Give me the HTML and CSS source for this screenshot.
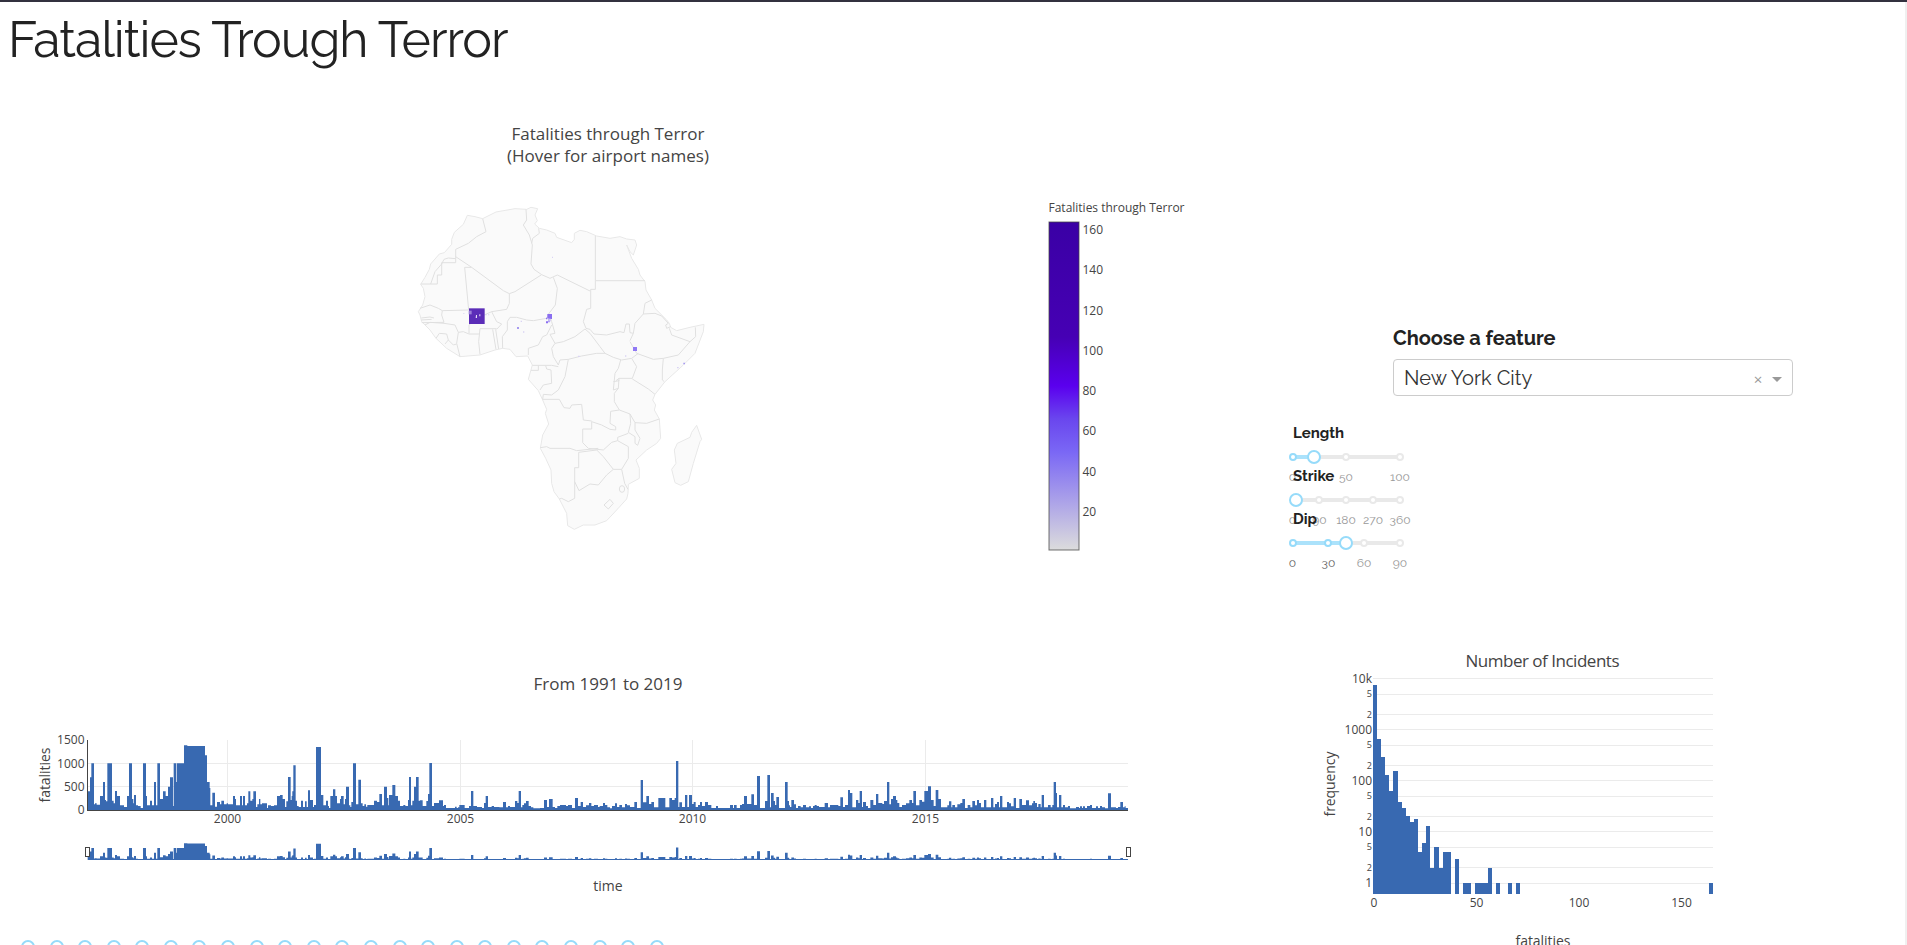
FILE: index.html
```html
<!DOCTYPE html>
<html lang="en">
<head>
<meta charset="utf-8">
<title>Fatalities Trough Terror</title>
<link rel="stylesheet" href="styles.css">
</head>
<body>
<div class="page">
  <h1 class="page-title"><span>Fatalities Trough Terror</span></h1>
  <main class="board">
    <div class="col-left">
      <svg class="map" viewBox="0 90 1216 530">
        <defs>
          <linearGradient id="scale" x1="0" y1="1" x2="0" y2="0">
            <stop offset="0" stop-color="#dcdcdc"/>
            <stop offset=".3" stop-color="#7a67f5"/>
            <stop offset=".4" stop-color="#6a46ee"/>
            <stop offset=".5" stop-color="#5a00ee"/>
            <stop offset=".65" stop-color="#4600b4"/>
            <stop offset="1" stop-color="#3a00a5"/>
          </linearGradient>
        </defs>
        <g class="chart-title">
          <text x="608" y="140" textLength="193">Fatalities through Terror</text>
          <text x="608" y="162" textLength="202">(Hover for airport names)</text>
        </g>
        <g transform="translate(400 190) scale(.33333)">
          <path class="land" d="M62 283L75 262L88 238L92 222L118 192L133 188L155 163L155 148L163 127L190 103L202 76L225 80L248 86L288 66L345 56L380 58L393 52L413 56L405 75L412 92L404 102L418 115L440 120L465 130L470 142L515 158L523 148L523 130L540 121L560 125L590 138L630 145L660 140L680 147L705 150L710 165L700 195L690 185L680 165L695 205L715 238L720 255L735 275L738 300L755 330L765 355L800 390L808 400L812 412L830 422L870 412L912 403L910 425L885 490L850 525L795 575L765 613L758 630L767 645L763 660L778 687L782 745L770 760L740 780L708 810L718 835L718 865L685 883L684 910L680 927L650 960L620 992L585 1005L550 1005L523 1018L503 1007L500 970L478 927L462 905L455 880L453 840L437 805L421 775L428 735L446 702L436 670L440 658L428 630L415 602L385 568L397 525L383 498L348 500L330 478L308 475L285 480L240 495L180 500L140 475L108 445L90 420L65 395L60 375L55 365L68 345L75 320L70 295Z
          M890 706L905 748L900 755L880 820L865 875L842 886L825 878L815 838L828 820L823 780L832 760L870 742L875 727Z"/>
          <path class="border" d="M248 86L258 125L230 140L205 160L167 178V218H125V255H112V282H62M167 206L145 204L132 208L125 222L105 245L92 282M167 200L215 232L310 302L328 311L345 305L425 254L402 238L393 222L397 165L388 135L370 105L380 90L378 58M395 160L398 145L418 130L416 115M215 232H194L206 360L127 362M60 355L90 345L115 355L127 362L125 375L132 397L65 398M64 384L90 381L102 384M64 390L95 388M328 311V340L320 358L275 365M425 254L450 265L472 255L570 303M586 138V272H735M586 272V298H572V355L560 358L550 395L558 415M460 262L472 295L466 345L447 370M322 395L330 382L350 382L380 390L400 392L440 385L447 370L455 395L465 430L450 433L465 460L490 455L525 440L555 417L570 430L600 470L615 490M465 460L455 475L460 500L475 525L480 510L505 508L545 498L590 490L615 490M385 495V475L415 465L428 440L440 435L455 405M308 475L307 440L322 420V395M278 418L288 478M287 418L296 477M240 416L236 455L240 493M240 416H290M207 430V405L230 385L275 365L290 395L305 402L290 418M175 427L190 425L207 432L237 432M175 427L170 460L180 500M75 405L90 397L132 400L165 405L175 427M108 445L118 430L140 432L145 450L135 462M145 450L160 465L170 462
          M755 330L735 340L730 372L705 400L700 430L690 452M558 415L570 418L582 432L620 435L660 425L672 428L678 402H688L690 428L700 430M730 372L765 370L785 378L805 400L797 405L800 415L812 410M808 415L815 435L870 455L887 440L886 412M870 455L835 495L790 505L760 508L710 490L690 455M615 490L640 502L665 510L695 505L715 490M790 505L787 540V570L793 575M695 505L710 530L697 565H657L648 572M662 510L655 535L645 550L640 600M697 567L745 597L765 613M657 565L655 595L643 610V635L658 660L690 672L705 698L740 700L778 687M640 575L658 572M655 595L640 600M690 672L692 700L685 727L705 740V760L713 766L720 745L705 720V698M658 660L632 664L630 700L647 710V720L630 718L605 705L575 695V717H548V758L565 775L610 780L635 757L653 752L685 770V805L665 838H640L610 800L590 780M653 752V742L685 730M428 628H478L492 653L510 655L515 645L545 643L550 690L575 693M421 773L440 770L450 775L510 775L530 782L595 775M590 780L536 787V833H524V925L505 935L485 925L478 927M524 875L537 902L570 882L595 885L620 855L640 838M665 838L674 880L684 898M612 945L630 928L640 940L625 957ZM397 526H455L475 530M393 541H415V527M437 527L440 537L453 540L455 580L430 585L420 600M505 508L495 560L475 600L455 615L430 613L428 628"/>
          <ellipse class="border" cx="666" cy="897" rx="8" ry="10"/>
          <rect x="207" y="355" width="47" height="47" fill="#5b2db8"/>
          <path d="M228 375h3v9h-4zM238 373h3v6h-3z" fill="#e8def8"/>
          <rect x="206" y="362" width="9" height="11" fill="#9b80d8"/>
          <path d="M442 372h14v15h-7v10h-4v-12h-3zM438 394h6v6h-6zM438 383h4v5h-4z" fill="#8a6ef0"/>
          <path d="M445 386h7v8h-7z" fill="#c9bff5"/>
          <rect x="699" y="471" width="12" height="12" fill="#9079f5"/>
          <path d="M351 411h6v6h-6zM850 518h5v5h-5z" fill="#a79af0"/>
          <path d="M256 373h4v3h-4zM264 373h4v3h-4zM369 424h4v4h-4zM534 497h5v4h-5zM675 496h4v4h-4zM831 531h5v4h-5zM456 200h3v4h-3zM190 369h3v3h-3zM362 392h4v4h-4z" fill="#d9d3f4"/>
        </g>
        <g class="tick">
          <text x="1048.500" y="212" textLength="136">Fatalities through Terror</text>
          <rect x="1049" y="222" width="30" height="328" fill="url(#scale)" stroke="#444" stroke-opacity=".75"/>
          <text x="1082.500" y="234">160</text><text x="1082.500" y="274">140</text>
          <text x="1082.500" y="315">120</text><text x="1082.500" y="355">100</text>
          <text x="1082.500" y="395">80</text><text x="1082.500" y="435">60</text>
          <text x="1082.500" y="476">40</text><text x="1082.500" y="516">20</text>
        </g>
      </svg>
      <svg class="timeline" viewBox="0 620 1216 300">
        <text class="chart-title" x="608" y="690" textLength="149">From 1991 to 2019</text>
        <path class="grid" d="M88 763.5H1128M88 786.5H1128M227.5 740V810M460.5 740V810M692.5 740V810M925.5 740V810"/>
        <g id="series" class="bars">
          <path transform="translate(20 660) scale(.33333)" d="M203 450V394H210V352H214V310H222V433H225V430H230V434H240V408H249V366H255V420H258V424H262V310H276V422H281V430H285V393H291V408H300V436H312V441H321V408H327V310H336V417H340V430H342V405H348V436H354V438H362V444H369V310H378V408H381V436H390V422H396V436H402V366H408V436H412V310H420V417H429V394H437V408H444V380H450V352H459V438H461V310H468V366H470V310H492V256H502V258H555V286H561V366H569V384H571V436H577V398H585V440H591V426H600V433H604V422H612V433H620V430H624V433H639V408H645V417H648V436H660V408H666V436H669V408H675V436H681V430H685V394H691V422H697V417H700V394H708V441H712V433H717V417H721V433H726V430H741V444H744V436H753V438H762V436H771V408H780V405H788V417H795V441H799V424H804V351H812V420H815V408H817V394H820V316H827V422H831V438H836V441H843V422H849V441H855V424H860V441H864V391H870V420H879V441H882V435H888V261H903V405H910V436H918V422H924V438H927V444H931V408H939V388H946V408H951V430H960V417H963V408H971V433H975V417H978V380H987V436H991V441H994V426H999V310H1008V433H1015V359H1023V430H1028V438H1033V433H1038V440H1042V435H1062V422H1071V426H1078V402H1086V436H1092V380H1101V414H1105V436H1107V405H1117V375H1126V408H1134V422H1140V438H1150V435H1156V438H1164V420H1167V351H1173V436H1177V422H1182V380H1188V351H1196V422H1200V450Z"/>
          <path transform="translate(400 720) scale(.33333)" d="M60 270V241H68V258H79V243H84V222H88V129H96V258H102V249H117V241H129V258H132V255H138V264H165V260H170V264H174V262H178V255H194V264H207V258H213V213H220V258H231V261H246V264H252V249H257V228H264V261H275V258H282V261H298V262H309V246H318V262H324V258H330V261H345V243H352V249H356V213H363V262H367V255H372V250H378V243H386V258H393V262H400V265H420V264H432V240H441V261H447V237H458V261H465V264H472V258H480V255H498V258H504V255H516V264H525V234H534V258H542V246H549V261H558V256H567V249H574V258H582V255H594V261H599V258H609V249H615V255H622V262H630V265H636V258H645V250H651V261H658V255H666V262H675V252H681V256H690V261H703V246H711V264H722V180H729V247H739V228H747V252H754V246H762V262H775V234H796V262H808V234H816V240H824V234H828V123H835V261H838V247H846V261H855V225H862V261H867V225H876V252H881V246H887V261H894V255H900V246H906V258H915V246H924V255H934V264H948V258H954V264H990V255H999V264H1002V255H1010V264H1020V255H1026V252H1032V228H1041V252H1054V223H1062V255H1071V168H1080V264H1095V243H1102V165H1110V262H1113V219H1121V243H1125V255H1129V231H1137V264H1155V186H1163V243H1167V256H1170V270Z"/>
          <path transform="translate(790 720) scale(.33333)" d="M0 270V261H4V240H12V253H18V264H24V258H32V262H39V255H48V262H57V259H63V264H69V258H74V255H80V258H87V261H104V249H114V262H120V255H145V258H151V232H159V261H165V255H174V210H180V219H187V262H198V240H205V249H209V213H216V261H219V246H228V258H234V264H241V240H250V255H258V222H265V249H277V252H282V243H291V186H298V253H303V237H309V228H318V240H322V249H328V261H336V255H348V250H358V240H366V249H370V213H378V256H388V240H396V245H403V213H414V199H423V240H431V258H437V210H445V237H453V262H472V256H477V244H484V262H487V255H495V262H502V253H511V249H517V237H525V264H533V255H541V262H547V243H555V256H561V240H567V249H573V262H582V240H589V262H603V234H610V262H615V252H621V246H627V262H630V228H637V262H651V246H657V250H663V259H671V234H678V264H688V237H696V255H708V241H717V256H726V250H730V243H735V249H741V261H745V252H752V262H755V225H762V262H774V255H782V262H787V255H791V186H798V219H801V262H807V225H814V262H819V255H825V262H834V258H840V265H858V261H867V264H870V259H876V264H879V259H885V264H891V258H900V255H906V264H918V259H924V264H930V258H936V262H945V265H954V220H963V262H978V264H984V261H991V246H999V262H1004V259H1007V264H1014V270Z"/>
        </g>
        <path class="axis" d="M87.5 740V810M87 810.5H1128"/>
        <use href="#series" transform="translate(0 651.8) scale(1 .257)"/>
        <rect class="bars" x="88" y="859" width="1040" height="1"/>
        <rect class="grip" x="85.5" y="847.5" width="4" height="9"/>
        <rect class="grip" x="1126.5" y="847.5" width="4" height="9"/>
        <g class="tick end">
          <text x="84.500" y="744">1500</text><text x="84.500" y="768">1000</text>
          <text x="84.500" y="791">500</text><text x="84.500" y="814">0</text>
        </g>
        <g class="tick mid">
          <text x="227.500" y="823">2000</text><text x="460.500" y="823">2005</text>
          <text x="692.500" y="823">2010</text><text x="925.500" y="823">2015</text>
        </g>
        <text class="axis-title" x="608" y="891">time</text>
        <text class="axis-title" transform="translate(50 775) rotate(-90)" textLength="55">fatalities</text>
      </svg>
    </div>
    <div class="col-right">
      <section class="controls">
        <h2 class="feature-title"><span>Choose a feature</span></h2>
        <div class="select"><span class="select-value">New York City</span><span class="select-clear">×</span><span class="select-arrow"></span></div>
        <div class="sliders">
          <div class="slider-block">
            <h3>Length</h3>
            <svg class="slider" viewBox="0 0 140 14">
              <rect class="rail" x="13" y="5" width="107" height="4" rx="2"/><rect class="track" x="13" y="5" width="21" height="4"/>
              <circle class="dot on" cx="13" cy="7" r="3"/><circle class="dot" cx="66" cy="7" r="3"/><circle class="dot" cx="120" cy="7" r="3"/>
              <circle class="handle" cx="34" cy="7" r="6"/>
            </svg>
            <svg class="marks" viewBox="0 0 140 16"><text x="12.500" y="12">0</text><text x="66" y="12">50</text><text x="120" y="12">100</text></svg>
          </div>
          <div class="slider-block">
            <h3>Strike</h3>
            <svg class="slider" viewBox="0 0 140 14">
              <rect class="rail" x="13" y="5" width="107" height="4" rx="2"/>
              <circle class="dot" cx="39" cy="7" r="3"/><circle class="dot" cx="66" cy="7" r="3"/><circle class="dot" cx="93" cy="7" r="3"/><circle class="dot" cx="120" cy="7" r="3"/>
              <circle class="handle" cx="16" cy="7" r="6"/>
            </svg>
            <svg class="marks" viewBox="0 0 140 16"><text x="12.500" y="12">0</text><text x="39.500" y="12">90</text><text x="66" y="12">180</text><text x="93" y="12">270</text><text x="120" y="12">360</text></svg>
          </div>
          <div class="slider-block">
            <h3>Dip</h3>
            <svg class="slider" viewBox="0 0 140 14">
              <rect class="rail" x="13" y="5" width="107" height="4" rx="2"/><rect class="track" x="13" y="5" width="53" height="4"/>
              <circle class="dot on" cx="13" cy="7" r="3"/><circle class="dot on" cx="48" cy="7" r="3"/><circle class="dot" cx="84" cy="7" r="3"/><circle class="dot" cx="120" cy="7" r="3"/>
              <circle class="handle" cx="66" cy="7" r="6"/>
            </svg>
            <svg class="marks" viewBox="0 0 140 16"><text class="active" x="12.500" y="12">0</text><text class="active" x="48.500" y="12">30</text><text x="84" y="12">60</text><text x="120" y="12">90</text></svg>
          </div>
        </div>
      </section>
      <svg class="histogram" viewBox="1216 620 691 325">
        <text class="chart-title" x="1542.500" y="667" textLength="154">Number of Incidents</text>
        <path class="grid" d="M1373 678.5h340M1373 694.5h340M1373 714.5h340M1373 729.5h340M1373 745.5h340M1373 765.5h340M1373 780.5h340M1373 796.5h340M1373 816.5h340M1373 831.5h340M1373 847.5h340M1373 867.5h340M1373 883.5h340"/>
        <path class="bars" transform="translate(1310 640) scale(.33333)" d="M189 762V135H201V297H213V351H225V405H237V453H249V393H264V486H276V504H288V528H300V546H312V537H324V636H336V609H348V558H360V684H372V621H387V684H399V636H423V762ZM435 762V657H447V762ZM459 762V729H483V762ZM495 762V729H534V684H546V762ZM558 762V729H570V762ZM594 762V729H606V762ZM618 762V729H630V762ZM1197 762V729H1209V762Z"/>
        <g class="tick end">
          <text x="1372" y="683">10k</text><text x="1372" y="734">1000</text><text x="1372" y="785">100</text><text x="1372" y="836">10</text><text x="1372" y="887">1</text>
        </g>
        <g class="tick end minor">
          <text x="1372" y="697">5</text><text x="1372" y="718">2</text><text x="1372" y="748">5</text><text x="1372" y="769">2</text><text x="1372" y="799">5</text><text x="1372" y="820">2</text><text x="1372" y="850">5</text><text x="1372" y="871">2</text>
        </g>
        <g class="tick mid">
          <text x="1374" y="907">0</text><text x="1476.500" y="907">50</text><text x="1579" y="907">100</text><text x="1681.500" y="907">150</text>
        </g>
        <text class="axis-title" x="1543" y="946" textLength="55">fatalities</text>
        <text class="axis-title" transform="translate(1335 784) rotate(-90)" textLength="65">frequency</text>
      </svg>
    </div>
  </main>
  <div class="year-slider">
    <i></i><i></i><i></i><i></i><i></i><i></i><i></i><i></i><i></i><i></i><i></i><i></i><i></i><i></i><i></i><i></i><i></i><i></i><i></i><i></i><i></i><i></i><i></i>
  </div>
</div>
</body>
</html>
```
FILE: styles.css
```css
* { box-sizing: border-box; }
html, body { margin: 0; height: 945px; overflow: hidden; background: #fff; }
body { font-family: Raleway, Lato, "Open Sans", sans-serif; color: #222; }
svg { display: block; }

.page {
  position: relative;
  height: 945px;
  overflow: hidden;
  border-top: 2px solid #33313f;
  background: linear-gradient(#f0f0f0, #f0f0f0) right / 2px 100% no-repeat;
}
.page-title {
  height: 88px;
  margin: 0;
  padding: 8px 0 0 8px;
  font-size: 50px;
  font-weight: 400;
  line-height: 60px;
  letter-spacing: -1px;
}
.board { display: flex; height: 855px; }
.col-left { width: 1216px; flex: none; }
.col-right { width: 691px; flex: none; }
.map { width: 1216px; height: 530px; }
.timeline { width: 1216px; height: 300px; }
.histogram { width: 691px; height: 325px; }

svg text { font-family: "Open Sans", sans-serif; fill: #444; }
.chart-title, svg .chart-title text { font-size: 17px; text-anchor: middle; }
.tick text { font-size: 12px; }
.tick.minor text { font-size: 9px; }
.end { text-anchor: end; }
.mid { text-anchor: middle; }
.axis-title { font-size: 14px; text-anchor: middle; }
.land { fill: #fafafa; stroke: #e8e8e8; stroke-width: 3; stroke-linejoin: round; }
.border { fill: none; stroke: #e0e0e0; stroke-width: 3; stroke-linejoin: round; }
.grid { fill: none; stroke: #ebebeb; }
.axis { fill: none; stroke: #444; }
.bars { fill: #3869b1; }
.grip { fill: #fff; stroke: #444; }

.controls { height: 530px; padding: 234px 0 0 177px; }
.feature-title {
  margin: 0;
  font-size: 20px;
  font-weight: 700;
  line-height: 28px;
  letter-spacing: -.05px;
}
.select {
  display: flex;
  align-items: center;
  width: 400px;
  height: 37px;
  margin-top: 7px;
  padding: 0 10px;
  border: 1px solid #ccc;
  border-radius: 4px;
  color: #333;
}
.select-value { flex: 1; font-size: 20px; line-height: 34px; }
.select-clear { width: 10px; margin: 2px 9px 0 0; font-family: "Open Sans", sans-serif; font-size: 15px; line-height: 16px; color: #999; text-align: center; }
.select-arrow { margin-top: 4px; border: 5px solid transparent; border-top-color: #999; border-bottom: 0; }
.sliders { display: flex; flex-direction: column; width: 140px; margin: 26px 0 0 -113px; }
.slider-block { height: 43px; }
.slider-block h3 {
  position: relative;
  z-index: 1;
  height: 28px;
  margin: 0 0 0 13px;
  font-size: 15px;
  font-weight: 700;
  line-height: 22px;
}
.slider { width: 140px; height: 14px; }
.marks { width: 140px; height: 16px; margin-top: 5px; }
.marks text { font-family: Raleway, Lato, sans-serif; font-size: 12px; fill: #999; text-anchor: middle; }
.marks .active { fill: #666; }
.rail { fill: #e9e9e9; }
.track { fill: #abe2fb; }
.dot { fill: #fff; stroke: #e9e9e9; stroke-width: 2; }
.dot.on { stroke: #96dbfa; }
.handle { fill: #fff; stroke: #96dbfa; stroke-width: 2; }

/* Runs past the lower edge of the viewport, over the chart area. */
.year-slider {
  position: absolute;
  left: 21px;
  top: 938px;
  display: flex;
  justify-content: space-between;
  width: 643px;
}
.year-slider i { width: 14px; height: 14px; border: 2px solid #96dbfa; border-radius: 50%; background: #fff; }
```
